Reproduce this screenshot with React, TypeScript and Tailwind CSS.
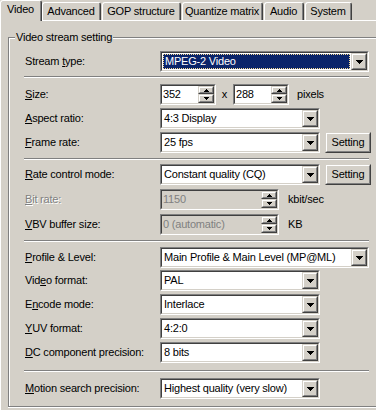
import type { ReactNode } from 'react';

function Tri({ up = false, size = 4 }: { up?: boolean; size?: number }) {
  const w = size * 2 - 1;
  return (
    <svg width={w} height={size} shapeRendering="crispEdges" className="block">
      {Array.from({ length: size }, (_, i) => (
        <rect
          key={i}
          x={i}
          y={up ? size - 1 - i : i}
          width={w - 2 * i}
          height={1}
          fill="#000"
        />
      ))}
    </svg>
  );
}

function Raised({ className = '', children }: { className?: string; children?: ReactNode }) {
  return (
    <div className={`border border-[#d4d0c8] border-r-[#404040] border-b-[#404040] ${className}`}>
      <div className="h-full border border-white border-r-[#808080] border-b-[#808080] bg-[#d4d0c8] flex items-center justify-center">
        {children}
      </div>
    </div>
  );
}

function Sunken({
  className = '',
  bg = 'bg-white',
  children,
}: {
  className?: string;
  bg?: string;
  children?: ReactNode;
}) {
  return (
    <div className={`border border-[#808080] border-r-white border-b-white ${className}`}>
      <div className={`h-full flex border border-[#404040] border-r-[#d4d0c8] border-b-[#d4d0c8] ${bg}`}>
        {children}
      </div>
    </div>
  );
}

function Combo({ value, w, selected }: { value: string; w: string; selected?: boolean }) {
  return (
    <Sunken className={`${w} h-[21px] shrink-0`}>
      <div className="flex-1 min-w-0 flex items-center px-[1px]">
        {selected ? (
          <div className="w-full h-[15px] bg-[#0a246a] text-white border border-dotted border-[#f5db95] flex items-center pl-[1px]">
            {value}
          </div>
        ) : (
          <span className="pl-[1px] whitespace-nowrap">{value}</span>
        )}
      </div>
      <Raised className="w-[16px] h-full shrink-0">
        <Tri />
      </Raised>
    </Sunken>
  );
}

function Spin({ value, w, disabled }: { value: string; w: string; disabled?: boolean }) {
  return (
    <Sunken className={`${w} h-[21px] shrink-0`} bg={disabled ? 'bg-[#d4d0c8]' : 'bg-white'}>
      <div
        className={`flex-1 min-w-0 flex items-center pl-[1px] whitespace-nowrap ${
          disabled ? 'text-[#808080]' : ''
        }`}
      >
        {value}
      </div>
      <div className="w-[16px] flex flex-col shrink-0">
        <Raised className="h-[8px]">
          <Tri up size={3} />
        </Raised>
        <Raised className="flex-1">
          <Tri size={3} />
        </Raised>
      </div>
    </Sunken>
  );
}

function Button({ label }: { label: string }) {
  return (
    <Raised className="w-[46px] h-[21px] ml-[5px] shrink-0">
      <span className="whitespace-nowrap">{label}</span>
    </Raised>
  );
}

function Label({ children, disabled }: { children: ReactNode; disabled?: boolean }) {
  return (
    <div
      className={`w-[135px] shrink-0 whitespace-nowrap ${
        disabled ? 'text-[#808080] [text-shadow:1px_1px_0_#fff]' : ''
      }`}
    >
      {children}
    </div>
  );
}

function Row({ mt, children }: { mt: string; children: ReactNode }) {
  return <div className={`flex items-center h-[21px] pl-[15px] ${mt}`}>{children}</div>;
}

function Sep({ mt }: { mt: string }) {
  return (
    <div className={`ml-[14px] w-[345px] h-[2px] border-t border-[#808080] border-b border-b-white ${mt}`} />
  );
}

function Tab({ label, w, active }: { label: string; w: string; active?: boolean }) {
  return (
    <div
      className={`${w} shrink-0 border-t border-l border-white border-r border-r-[#404040] rounded-t-[3px] bg-[#d4d0c8] ${
        active ? 'h-[21px] -mb-px relative z-10' : 'h-[18px] mr-px'
      }`}
    >
      <div
        className={`h-full border-r border-[#808080] flex justify-center whitespace-nowrap ${
          active ? 'items-start pt-[2px]' : 'items-center'
        }`}
      >
        {label}
      </div>
    </div>
  );
}

export default function App() {
  return (
    <div className="w-[376px] h-[410px] overflow-hidden bg-[#d4d0c8] text-black text-[11px] leading-[13px] tracking-[-0.2px] font-['Liberation_Sans',Arial,sans-serif]">
      <div className="flex items-end h-[20px]">
        <Tab label="Video" w="w-[42px]" active />
        <Tab label="Advanced" w="w-[59px]" />
        <Tab label="GOP structure" w="w-[79px]" />
        <Tab label="Quantize matrix" w="w-[81px]" />
        <Tab label="Audio" w="w-[40px]" />
        <Tab label="System" w="w-[47px]" />
      </div>

      <div className="h-[390px] border-t border-l border-white">
        <div className="mt-[16px] ml-[7px] w-[400px] border-r border-b border-white">
          <div className="border border-[#808080]">
            <div className="relative h-[368px] border-t border-l border-white flex flex-col">
              <span className="absolute -top-[8px] left-[5px] px-[1px] bg-[#d4d0c8] whitespace-nowrap">
                Video stream setting
              </span>

              <Row mt="mt-[12px]">
                <Label>
                  Stream <u>t</u>ype:
                </Label>
                <Combo value="MPEG-2 Video" w="w-[209px]" selected />
              </Row>

              <Sep mt="mt-[4px]" />

              <Row mt="mt-[6px]">
                <Label>
                  <u>S</u>ize:
                </Label>
                <Spin value="352" w="w-[56px]" />
                <span className="w-[17px] text-center">x</span>
                <Spin value="288" w="w-[56px]" />
                <span className="ml-[8px]">pixels</span>
              </Row>

              <Row mt="mt-[3px]">
                <Label>
                  <u>A</u>spect ratio:
                </Label>
                <Combo value="4:3 Display" w="w-[160px]" />
              </Row>

              <Row mt="mt-[3px]">
                <Label>
                  <u>F</u>rame rate:
                </Label>
                <Combo value="25 fps" w="w-[160px]" />
                <Button label="Setting" />
              </Row>

              <Sep mt="mt-[5px]" />

              <Row mt="mt-[4px]">
                <Label>
                  <u>R</u>ate control mode:
                </Label>
                <Combo value="Constant quality (CQ)" w="w-[160px]" />
                <Button label="Setting" />
              </Row>

              <Row mt="mt-[4px]">
                <Label disabled>
                  <u>B</u>it rate:
                </Label>
                <Spin value="1150" w="w-[119px]" disabled />
                <span className="ml-[9px]">kbit/sec</span>
              </Row>

              <Row mt="mt-[4px]">
                <Label>
                  <u>V</u>BV buffer size:
                </Label>
                <Spin value="0 (automatic)" w="w-[119px]" disabled />
                <span className="ml-[9px]">KB</span>
              </Row>

              <Sep mt="mt-[5px]" />

              <Row mt="mt-[5px]">
                <Label>
                  <u>P</u>rofile &amp; Level:
                </Label>
                <Combo value="Main Profile & Main Level (MP@ML)" w="w-[209px]" />
              </Row>

              <Row mt="mt-[2px]">
                <Label>
                  Vid<u>e</u>o format:
                </Label>
                <Combo value="PAL" w="w-[160px]" />
              </Row>

              <Row mt="mt-[3px]">
                <Label>
                  E<u>n</u>code mode:
                </Label>
                <Combo value="Interlace" w="w-[160px]" />
              </Row>

              <Row mt="mt-[3px]">
                <Label>
                  <u>Y</u>UV format:
                </Label>
                <Combo value="4:2:0" w="w-[160px]" />
              </Row>

              <Row mt="mt-[3px]">
                <Label>
                  <u>D</u>C component precision:
                </Label>
                <Combo value="8 bits" w="w-[160px]" />
              </Row>

              <Sep mt="mt-[7px]" />

              <Row mt="mt-[6px]">
                <Label>
                  <u>M</u>otion search precision:
                </Label>
                <Combo value="Highest quality (very slow)" w="w-[160px]" />
              </Row>
            </div>
          </div>
        </div>
      </div>
    </div>
  );
}
